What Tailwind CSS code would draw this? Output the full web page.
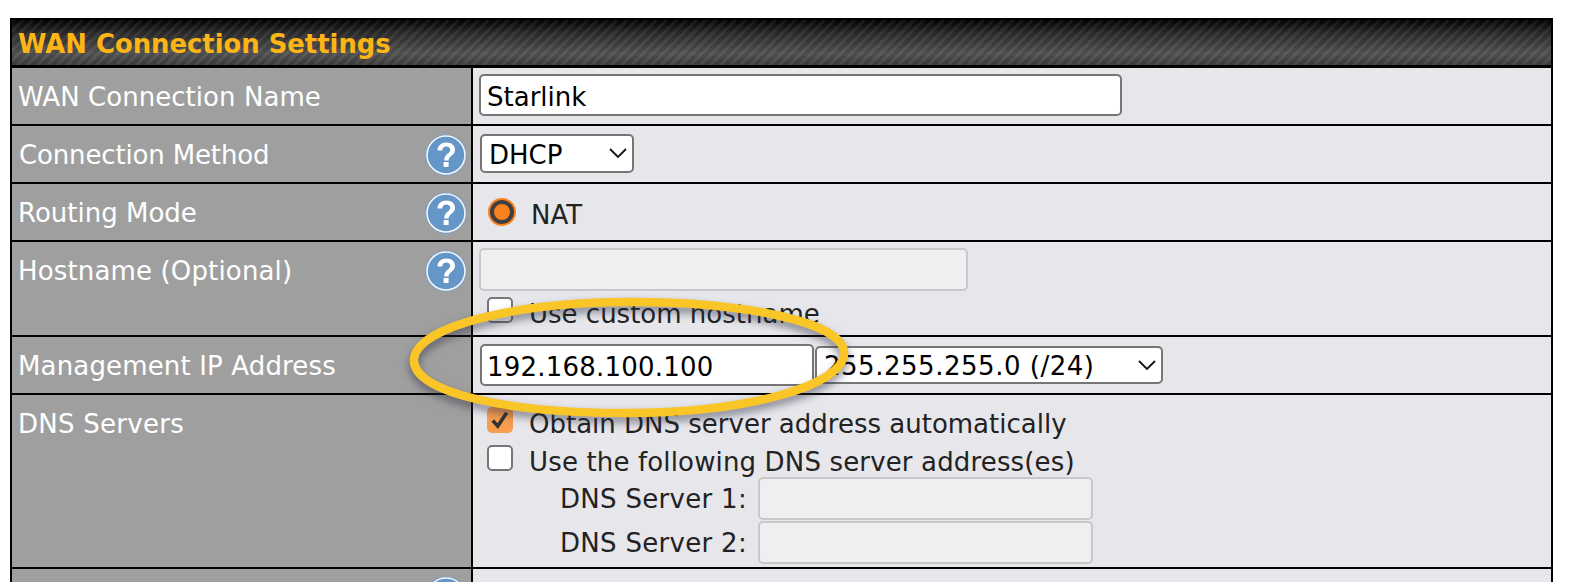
<!DOCTYPE html>
<html lang="en">
<head>
    <meta charset="UTF-8">
    <title>WAN Connection Settings</title>
    <script src="https://cdn.jsdelivr.net/npm/@tailwindcss/browser@4"></script>
</head>
<body class="bg-white h-[582px] overflow-hidden font-['DejaVu_Sans',sans-serif] text-[26px] leading-[32px] text-[#222]">

<svg class="hidden">
    <symbol id="help" viewBox="0 0 42 42">
        <circle cx="21" cy="21" r="20.500" fill="#6c9bc9"/>
        <circle cx="21" cy="21" r="19" fill="#6596c8" stroke="#f2f5f9" stroke-width="1.600"/>
        <path d="M12.500 16.500c0-5 3.800-8 8.800-8 5.100 0 8.700 2.800 8.700 7.200 0 5.800-6.400 6-6.400 10.800h-4.400c0-6.800 6-7 6-10.600 0-1.900-1.500-3.300-3.800-3.300-2.500 0-4 1.500-4.200 3.900z" fill="#fff"/>
        <rect x="18.600" y="28" width="5" height="5" fill="#fff"/>
    </symbol>
</svg>

<div class="pt-[18px] px-[10px]">
    <div class="relative w-[1543px] border-x-2 border-t-2 border-black h-[564px] overflow-hidden">
        <!-- title bar -->
        <div class="h-[46px] -mt-px flex items-center px-[6px] pt-[4px] font-bold text-[25.85px] text-[#fdb515] bg-[repeating-linear-gradient(135deg,rgba(255,255,255,0.06)_0px,rgba(255,255,255,0.06)_3px,rgba(0,0,0,0.05)_3px,rgba(0,0,0,0.05)_7px),linear-gradient(to_bottom,#000_0%,#2a2a2a_30%,#525252_75%,#3c3c3c_100%)]">
            WAN Connection Settings
        </div>

        <div class="grid grid-cols-[459px_1fr] grid-rows-[56px_56px_56px_93px_56px_172px_40px] gap-y-[2px] gap-x-[2px] bg-black pt-[3px]">
            <!-- row 1 -->
            <div class="bg-[#9f9f9f] text-white pl-[6px] pt-[13px] tracking-[0.05px]">WAN Connection Name</div>
            <div class="bg-[#e6e6eb] pl-[6px] pt-[6px]">
                <input type="text" value="Starlink" class="block w-[643px] h-[42px] pt-[3px] bg-white border-2 border-[#767676] rounded-[5px] px-[6px] text-black outline-none">
            </div>

            <!-- row 2 -->
            <div class="bg-[#9f9f9f] text-white pl-[7px] pt-[13px] flex justify-between pr-[4px]">
                <span class="tracking-[-0.15px]">Connection Method</span>
                <svg class="w-[42px] h-[42px] -mt-[5px]"><use href="#help"/></svg>
            </div>
            <div class="bg-[#e6e6eb] pl-[7px] pt-[8px]">
                <div class="relative w-[154px]">
                    <select class="block appearance-none w-full h-[39px] pt-[2px] bg-white border-2 border-[#767676] rounded-[5px] pl-[7px] text-black outline-none">
                        <option>DHCP</option>
                    </select>
                    <svg class="absolute right-[7px] top-[13px] w-[18px] h-[12px]" viewBox="0 0 18 12" fill="none" stroke="#111" stroke-width="1.800"><path d="M1 2l8 8 8-8"/></svg>
                </div>
            </div>

            <!-- row 3 -->
            <div class="bg-[#9f9f9f] text-white pl-[6px] pt-[13px] flex justify-between pr-[4px]">
                <span>Routing Mode</span>
                <svg class="w-[42px] h-[42px] -mt-[5px]"><use href="#help"/></svg>
            </div>
            <div class="bg-[#e6e6eb] pl-[16px] pt-[15px] flex items-start">
                <span class="w-[26px] h-[26px] rounded-full bg-[#f7821e] border-[5px] border-[#3f3f3f] outline-2 outline-[#f7821e] -outline-offset-1"></span>
                <span class="ml-[16px]">NAT</span>
            </div>

            <!-- row 4 -->
            <div class="bg-[#9f9f9f] text-white pl-[6px] pt-[13px] flex justify-between pr-[4px]">
                <span class="tracking-[0.15px]">Hostname (Optional)</span>
                <svg class="w-[42px] h-[42px] -mt-[5px]"><use href="#help"/></svg>
            </div>
            <div class="bg-[#e6e6eb] pl-[6px] pt-[6px]">
                <input type="text" disabled class="block w-[489px] h-[43px] bg-[#efeff1] border-2 border-[#c8c8c8] rounded-[5px]">
                <div class="flex items-start pl-[8px] mt-[6px]">
                    <span class="w-[26px] h-[26px] bg-white border-2 border-[#767676] rounded-[5px]"></span>
                    <span class="ml-[16px] mt-[1px]">Use custom hostname</span>
                </div>
            </div>

            <!-- row 5 -->
            <div class="bg-[#9f9f9f] text-white pl-[6px] pt-[13px] tracking-[0.15px]">Management IP Address</div>
            <div class="bg-[#e6e6eb] pl-[7px] pt-[7px] flex items-start gap-[1px]">
                <input type="text" value="192.168.100.100" class="block w-[334px] h-[42px] pt-[3px] bg-white border-2 border-[#767676] rounded-[5px] px-[5px] text-black outline-none tracking-[0.22px]">
                <div class="relative w-[348px] mt-[2px]">
                    <select class="block appearance-none w-full h-[38px] pt-[2px] bg-white border-2 border-[#767676] rounded-[5px] pl-[7px] text-black outline-none tracking-[0.52px]">
                        <option>255.255.255.0 (/24)</option>
                    </select>
                    <svg class="absolute right-[7px] top-[13px] w-[18px] h-[12px]" viewBox="0 0 18 12" fill="none" stroke="#111" stroke-width="1.800"><path d="M1 2l8 8 8-8"/></svg>
                </div>
            </div>

            <!-- row 6 -->
            <div class="bg-[#9f9f9f] text-white pl-[6px] pt-[13px] tracking-[0.27px]">DNS Servers</div>
            <div class="bg-[#e6e6eb] pl-[14px] pt-[12px]">
                <div class="flex items-start">
                    <span class="w-[26px] h-[26px] bg-[#f79d4f] rounded-[5px] flex items-center justify-center">
                        <svg class="w-[20px] h-[20px]" viewBox="0 0 18 18" fill="none" stroke="#333" stroke-width="3.200"><path d="M2.500 9.500l4.500 5 8-12"/></svg>
                    </span>
                    <span class="ml-[16px] mt-px">Obtain DNS server address automatically</span>
                </div>
                <div class="flex items-start mt-[5px]">
                    <span class="w-[26px] h-[26px] bg-white border-2 border-[#767676] rounded-[5px]"></span>
                    <span class="ml-[16px] mt-[1px] tracking-[0.15px]">Use the following DNS server address(es)</span>
                </div>
                <div class="flex items-center -mt-[1px] ml-[73px] gap-[11px]">
                    <span class="tracking-[0.3px]">DNS Server 1:</span>
                    <input type="text" disabled class="block w-[335px] h-[43px] bg-[#efeff1] border-2 border-[#c8c8c8] rounded-[5px]">
                </div>
                <div class="flex items-center mt-px ml-[73px] gap-[11px]">
                    <span class="tracking-[0.3px]">DNS Server 2:</span>
                    <input type="text" disabled class="block w-[335px] h-[43px] bg-[#efeff1] border-2 border-[#c8c8c8] rounded-[5px]">
                </div>
            </div>

            <!-- row 7, cut off by the picture edge -->
            <div class="bg-[#9f9f9f] flex justify-end pr-[4px] pt-[7px]">
                <svg class="w-[42px] h-[42px]"><use href="#help"/></svg>
            </div>
            <div class="bg-[#e6e6eb]"></div>
        </div>

        <!-- hand drawn marker round the management IP -->
        <svg class="absolute left-[-12px] top-[-20px] w-[1572px] h-[582px] pointer-events-none drop-shadow-[0_5px_4px_rgba(40,40,60,0.55)]" viewBox="0 0 1572 582" fill="none">
            <path d="M414 358C420 325 520 302 630 302C745 302 842 322 844 352C846 386 745 413 625 413C505 413 410 392 414 358Z" stroke="#f9c527" stroke-width="8.500"/>
        </svg>
    </div>
</div>
</body>
</html>
